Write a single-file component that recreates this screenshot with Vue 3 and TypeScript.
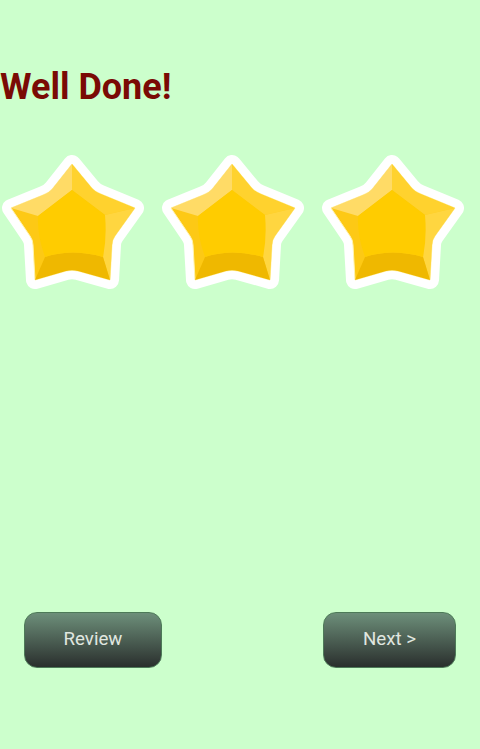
<script setup lang="ts">
const stars: number[] = [1, 2, 3]
const outline =
  'M72 14 L91 37 Q95 42 101 44 L135 58 L115 86 Q112 90 112 95 L110 130 L78 121 Q72 119.500 66 121 L35 130 L33 95 Q33 90 30 86 L11 58 L43 45 Q49 43 53 38 Z'
</script>

<template>
  <main class="page">
    <h1 class="title">Well Done!</h1>
    <div class="stars">
      <div v-for="s in stars" :key="s" class="star">
        <svg viewBox="0 0 144 144" width="144" height="144">
          <path :d="outline" fill="#fff" stroke="#fff" stroke-width="18" stroke-linejoin="round" />
          <path :d="outline" fill="#fdc915" stroke="#fff3b0" stroke-width="1" stroke-linejoin="round" />
          <path d="M72 14 L91 37 Q95 42 101 44 L135 58 L105 65 L72 40 Z" fill="#ffd22e" />
          <path d="M72 14 L72 40 L38 66 L11 58 L43 45 Q49 43 53 38 Z" fill="#ffdb66" />
          <path d="M135 58 L105 65 L103 107 L110 130 L112 95 Q112 90 115 86 Z" fill="#ffd640" />
          <path d="M35 130 L45 107 Q72 98 103 107 L110 130 L78 121 Q72 119.500 66 121 Z" fill="#efb800" />
          <path d="M72 40 L105 65 Q107 88 103 107 Q72 98 45 107 Q37 85 38 66 Z" fill="#ffcc00" />
        </svg>
      </div>
    </div>
    <div class="actions">
      <button class="btn review" type="button">Review</button>
      <button class="btn next" type="button">Next &gt;</button>
    </div>
  </main>
</template>

<style scoped>
.page {
  box-sizing: border-box;
  height: 749px;
  background: #ccffcc;
  display: flex;
  flex-direction: column;
  font-family: Roboto, "Liberation Sans", sans-serif;
  overflow: hidden;
}
.title {
  margin: 67px 0 0;
  color: #7a0a05;
  font-size: 36px;
  line-height: 40px;
  font-weight: 700;
}
.stars {
  display: flex;
  margin-top: 43px;
}
.star {
  width: 160px;
  height: 144px;
}
.star svg {
  display: block;
}
.actions {
  display: flex;
  justify-content: space-between;
  margin-top: auto;
  padding: 0 24px 81px;
}
.btn {
  height: 56px;
  border: 1px solid #4d7a58;
  border-radius: 13px;
  background: linear-gradient(#6d8f7a, #2a2f2d);
  color: #e0e7e0;
  font-family: inherit;
  font-size: 18.7px;
  padding: 0 0 3px;
}
.review {
  width: 138px;
}
.next {
  width: 133px;
}
</style>
<style>
html,
body {
  margin: 0;
  background: #ccffcc;
}
</style>
